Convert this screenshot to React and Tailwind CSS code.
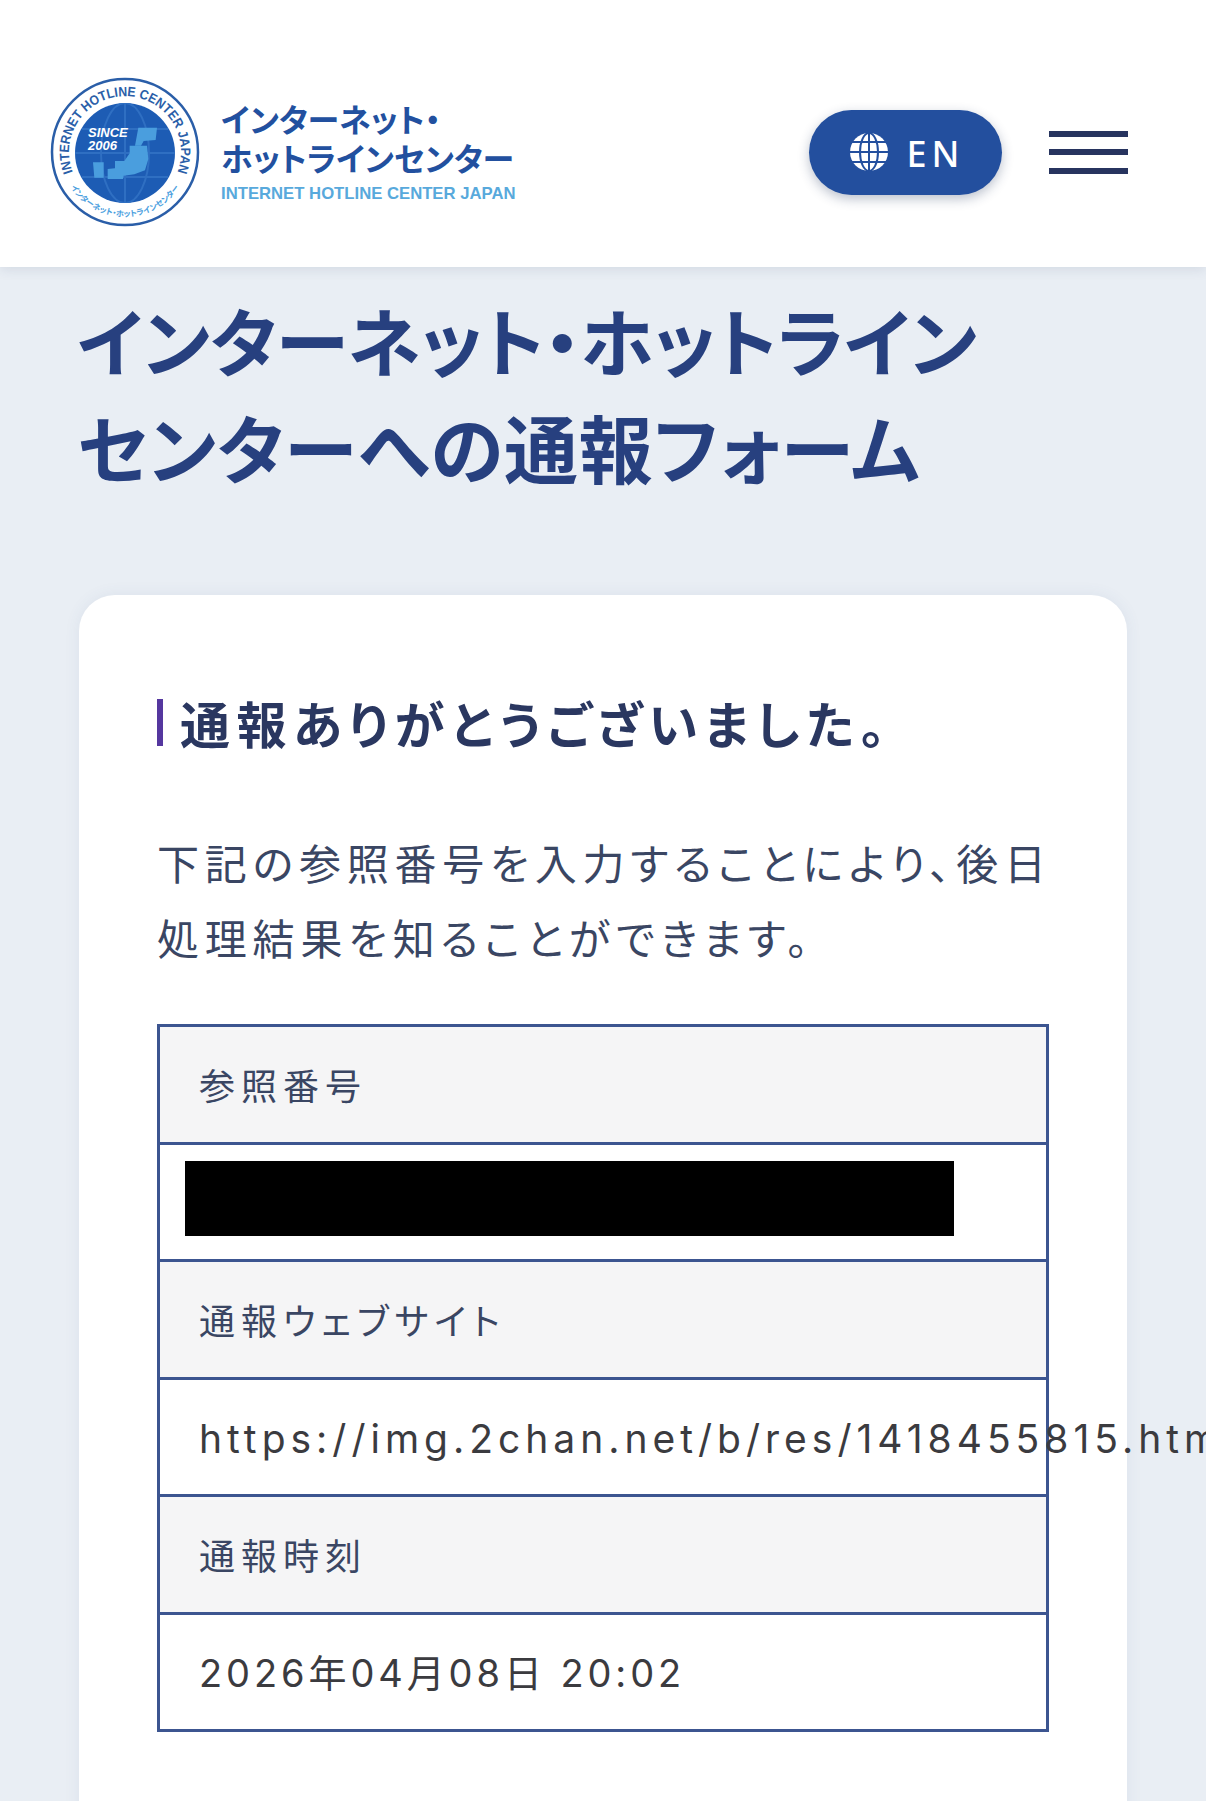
import React from "react";

const jp = "font-['Noto_Sans_CJK_JP',sans-serif] [font-feature-settings:'palt']";

const Logo = () => (
  <svg width="150" height="150" viewBox="0 0 150 150" className="shrink-0">
    <defs>
      <path id="topArc" d="M 23 96 A 56 56 0 1 1 127 96" />
      <path id="bottomArc" d="M 20 109.4 A 65 65 0 0 0 130 109.4" />
      <clipPath id="ball">
        <circle cx="75" cy="76" r="50" />
      </clipPath>
    </defs>
    <circle cx="75" cy="75" r="73" fill="#fff" stroke="#2a5ea8" strokeWidth="2.5" />
    <circle cx="75" cy="76" r="50" fill="#1d5cb4" />
    <g clipPath="url(#ball)" stroke="#2f6fc2" strokeWidth="2" fill="none">
      <ellipse cx="75" cy="76" rx="24" ry="50" />
      <path d="M75 26V126M25 76H125M32 52H118M32 100H118" />
    </g>
    <g transform="translate(75 75) scale(0.3333) translate(-242 -241)" fill="#4a9ede">
      <path d="M282 168H338L334 205L298 208L290 222H272Z" />
      <path d="M256 222H308L312 262L302 296L270 308L238 312L236 322H190V292L212 290V268H240L256 245Z" />
      <path d="M146 272H178V318H150Z" />
    </g>
    <text x="38" y="60" fill="#fff" fontSize="13" fontWeight="700" fontStyle="italic" fontFamily="'Liberation Sans',sans-serif">SINCE</text>
    <text x="38" y="73" fill="#fff" fontSize="13" fontWeight="700" fontStyle="italic" fontFamily="'Liberation Sans',sans-serif">2006</text>
    <text fill="#2a5ea8" fontSize="13.5" fontWeight="700" fontFamily="'Liberation Sans',sans-serif">
      <textPath href="#topArc" startOffset="50%" textAnchor="middle" textLength="216" lengthAdjust="spacingAndGlyphs">INTERNET HOTLINE CENTER JAPAN</textPath>
    </text>
    <text fill="#4a9ede" fontSize="8" fontWeight="700" fontFamily="'Noto Sans CJK JP',sans-serif">
      <textPath href="#bottomArc" startOffset="50%" textAnchor="middle">インターネット・ホットラインセンター</textPath>
    </text>
  </svg>
);

const Globe = () => (
  <svg width="40" height="40" viewBox="0 0 40 40">
    <circle cx="20" cy="20" r="19" fill="#fff" />
    <g stroke="#234f9e" strokeWidth="2" fill="none">
      <ellipse cx="20" cy="20" rx="9" ry="19" />
      <path d="M20 0V40M0 20H40M3 10H37M3 30H37" />
    </g>
  </svg>
);

const rows = [
  { text: "参照番号", cls: "bg-[#f5f5f6] text-[36px] tracking-[6px] text-[#3a4663]" },
  { redacted: true, cls: "bg-white" },
  { text: "通報ウェブサイト", cls: "bg-[#f5f5f6] text-[36px] tracking-[6px] text-[#3a4663]" },
  { text: "https://img.2chan.net/b/res/1418455815.htm", cls: "bg-white pt-[4px] font-['Inter','Noto_Sans_CJK_JP',sans-serif] text-[39px] tracking-[5px] text-[#3b3b3f]" },
  { text: "通報時刻", cls: "bg-[#f5f5f6] text-[36px] tracking-[6px] text-[#3a4663]" },
  { text: "2026年04月08日 20:02", cls: "bg-white pt-[4px] font-['Inter','Noto_Sans_CJK_JP',sans-serif] text-[38px] tracking-[3.9px] text-[#3b3b3f]" },
];

export default function App() {
  return (
    <div className={`h-[1801px] overflow-hidden bg-[#e9eef4] ${jp}`}>
      <header className="relative z-10 flex h-[267px] items-center bg-white pl-[50px] pr-[78px] pt-[37px] shadow-[0_2px_12px_rgba(40,60,100,0.12)]">
        <Logo />
        <div className="ml-[21px] flex flex-col">
          <div className="text-[32px] font-bold leading-[39px] text-[#22509f]">
            インターネット・
            <br />
            ホットラインセンター
          </div>
          <div className="mt-[6px] text-[16.7px] font-bold leading-[22px] text-[#58a9dc] font-['Liberation_Sans',sans-serif]">
            INTERNET HOTLINE CENTER JAPAN
          </div>
        </div>
        <button className="ml-auto flex h-[85px] w-[193px] items-center justify-center gap-[18px] rounded-full bg-[#234f9e] pl-[2px] shadow-[0_4px_12px_rgba(30,50,90,0.3)]">
          <Globe />
          <span className="pt-[3px] text-[36px] font-medium tracking-[5px] text-white font-['Noto_Sans',sans-serif]">EN</span>
        </button>
        <div className="ml-[47px] flex w-[79px] flex-col gap-[12.5px]">
          <span className="h-[6px] bg-[#27345f]" />
          <span className="h-[6px] bg-[#27345f]" />
          <span className="h-[6px] bg-[#27345f]" />
        </div>
      </header>

      <main className="px-[79px]">
        <h1 className="-ml-[2px] pt-[18px] text-[74px] font-bold leading-[107px] text-[#27407f]">
          <span className="tracking-[-0.6px]">インターネット・ホットライン</span>
          <br />
          <span className="tracking-[0.7px]">センターへの通報フォーム</span>
        </h1>

        <section className="mt-[96px] h-[1300px] rounded-[36px] bg-white pl-[78px] pr-[78px] pt-[104px] shadow-[0_0_16px_rgba(60,90,140,0.08)]">
          <h2 className="flex h-[47px] items-center border-l-[6px] border-[#55379f] pl-[17px] text-[50px] font-bold tracking-[6.5px] text-[#2a3760]">
            通報ありがとうございました。
          </h2>

          <p className="mt-[78px] whitespace-nowrap text-[42px] leading-[75px] tracking-[5.8px] text-[#3a4663]">
            下記の参照番号を入力することにより、後日
            <br />
            処理結果を知ることができます。
          </p>

          <div className="mt-[50px] border-[3px] border-b-0 border-[#3c5590]">
            {rows.map((row, i) => (
              <div
                key={i}
                className={`flex h-[117.5px] items-center whitespace-nowrap border-b-[3px] border-[#3c5590] pl-[39px] ${row.cls}`}
              >
                {row.redacted ? <div className="mb-[6px] -ml-[14px] h-[75px] w-[769px] bg-black" /> : row.text}
              </div>
            ))}
          </div>
        </section>
      </main>
    </div>
  );
}
